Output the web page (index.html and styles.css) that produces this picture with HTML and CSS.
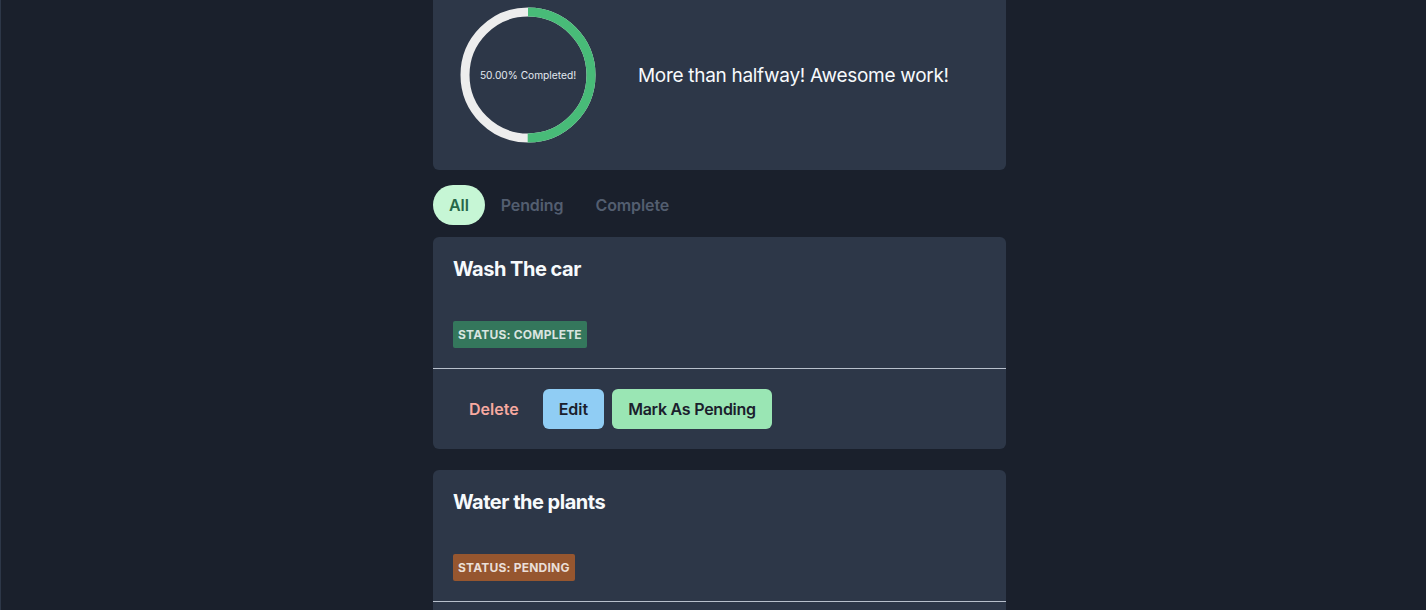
FILE: index.html
```html
<!DOCTYPE html>
<html lang="en">
<head>
<meta charset="utf-8">
<title>Todos</title>
<link rel="stylesheet" href="styles.css">
</head>
<body>
<div class="page">
  <main class="wrap">
    <section class="summary">
      <div class="ring">
        <svg width="150" height="150" viewBox="0 0 150 150">
          <circle cx="75" cy="75" r="63" fill="none" stroke="#EDEDED" stroke-width="9"/>
          <circle cx="75" cy="75" r="63" fill="none" stroke="#48BB78" stroke-width="9"
                  stroke-dasharray="197.92 395.84" transform="rotate(-90 75 75)"/>
        </svg>
        <span class="ring-label">50.00% Completed!</span>
      </div>
      <p class="message">More than halfway! Awesome work!</p>
    </section>

    <nav class="tabs">
      <button class="tab active">All</button>
      <button class="tab">Pending</button>
      <button class="tab">Complete</button>
    </nav>

    <article class="card">
      <div class="card-body">
        <h2 class="title">Wash The car</h2>
        <span class="badge badge-complete">Status: Complete</span>
      </div>
      <div class="card-footer">
        <button class="btn btn-ghost">Delete</button>
        <button class="btn btn-blue">Edit</button>
        <button class="btn btn-green">Mark As Pending</button>
      </div>
    </article>

    <article class="card">
      <div class="card-body">
        <h2 class="title">Water the plants</h2>
        <span class="badge badge-pending">Status: Pending</span>
      </div>
      <div class="card-footer">
        <button class="btn btn-ghost">Delete</button>
        <button class="btn btn-blue">Edit</button>
        <button class="btn btn-green">Mark As Complete</button>
      </div>
    </article>
  </main>
</div>
</body>
</html>
```

FILE: styles.css
```css
* { box-sizing: border-box; }

html, body {
  margin: 0;
  padding: 0;
  background: #1A202C;
  height: 100%;
  overflow: hidden;
}

body {
  font-family: Inter, "Liberation Sans", sans-serif;
  color: #EDF2F7;
  border-left: 1px solid #2D3748;
}

.page {
  padding-left: 12px;
  display: flex;
  justify-content: center;
}

.wrap {
  width: 573px;
  margin-top: -20px;
  display: flex;
  flex-direction: column;
}

.summary {
  background: #2D3748;
  border-radius: 6px;
  padding: 20px;
  display: flex;
  align-items: center;
  gap: 35px;
}

.ring {
  position: relative;
  width: 150px;
  height: 150px;
  flex: none;
}

.ring svg { display: block; }

.ring-label {
  position: absolute;
  inset: 0;
  display: flex;
  align-items: center;
  justify-content: center;
  font-size: 10.2px;
  color: #E2E8F0;
}

.message {
  margin: 0;
  font-size: 19px;
  letter-spacing: -0.3px;
  color: #F7FAFC;
}

.tabs {
  display: flex;
  margin-top: 15px;
  margin-bottom: 12px;
}

.tab {
  font-family: inherit;
  font-size: 16px;
  font-weight: 600;
  line-height: 24px;
  padding: 8px 16px;
  border: none;
  background: none;
  color: #535E70;
  letter-spacing: -0.1px;
  border-radius: 999px;
}

.tab.active {
  background: #C6F6D5;
  color: #276749;
}

.card {
  background: #2D3748;
  border-radius: 6px;
  margin-bottom: 21px;
}

.card-body {
  padding: 20px;
  display: flex;
  flex-direction: column;
  align-items: flex-start;
  border-bottom: 1px solid #B8C0CC;
}

.title {
  margin: 0 0 40px;
  font-size: 20px;
  line-height: 24px;
  font-weight: 700;
  letter-spacing: -0.5px;
  color: #F7FAFC;
}

.badge {
  display: inline-block;
  font-size: 12px;
  font-weight: 700;
  line-height: 17px;
  letter-spacing: 0.2px;
  text-transform: uppercase;
  padding: 5px 5px;
  border-radius: 2px;
  color: rgba(255, 255, 255, 0.82);
}

.badge-complete { background: #34775C; }
.badge-pending { background: #96562F; }

.card-footer {
  padding: 20px;
  display: flex;
  gap: 8px;
}

.btn {
  font-family: inherit;
  font-size: 16px;
  font-weight: 600;
  height: 40px;
  padding: 0 16px;
  border: none;
  border-radius: 6px;
  color: #1A202C;
}

.btn-ghost {
  background: transparent;
  color: #F7A9A0;
}

.btn-blue { background: #90CDF4; }

.btn-green {
  background: #9AE6B4;
  letter-spacing: -0.25px;
}
```
